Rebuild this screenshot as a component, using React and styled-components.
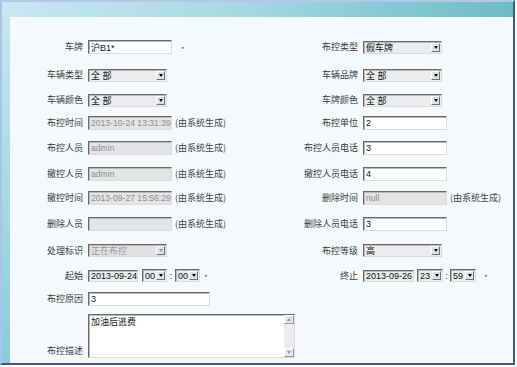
import styled, { createGlobalStyle } from "styled-components";

const GlobalStyle = createGlobalStyle`
  body {
    margin: 0;
    background: #fff;
  }
`;

const Frame = styled.div`
  width: 515px;
  height: 365px;
  box-sizing: border-box;
  border-style: solid;
  border-width: 2px;
  border-color: #b4c6ea #3b5c90 #3b5c90 #a9c4e8;
  display: grid;
  grid-template-columns: 8px 1fr;
  grid-template-rows: 15px 1fr;
`;

const TitleBar = styled.div`
  grid-column: 1 / -1;
  background: linear-gradient(90deg, #c9e8f0 0%, #a8d9e3 45%, #6dbcc6 100%);
`;

const SideStrip = styled.div`
  background: linear-gradient(180deg, #c5e6ee, #89cdda);
`;

const Panel = styled.div`
  background: #f5f9fd;
  padding-top: 16px;
  display: grid;
  grid-template-columns: 78px 182px 93px 1fr;
  grid-template-rows: 28px 28px 22px 23px 27px 25px 23px 29px 25px 25px 21px 49px;
  align-items: center;
  font-family: "Noto Sans CJK SC", sans-serif;
  font-size: 9px;
`;

const Label = styled.div`
  text-align: right;
  padding-right: 5px;
  line-height: 12px;
  color: #3a3a3a;
  white-space: nowrap;
  align-self: ${(p) => (p.$end ? "end" : "center")};
  padding-bottom: ${(p) => (p.$end ? "1px" : "0")};
`;

const Field = styled.div`
  display: flex;
  align-items: center;
  grid-column: ${(p) => p.$span || "auto"};
  align-self: ${(p) => (p.$end ? "end" : "center")};
`;

const inset = `
  box-sizing: border-box;
  border: 1px solid;
  border-color: #6a6a6a #dcdcdc #dcdcdc #6a6a6a;
  box-shadow: inset 1px 1px 0 #b8b8b8;
`;

const tones = {
  plain: { bg: "#fff", fg: "#111", size: 9 },
  locked: { bg: "#e4e4e4", fg: "#8e8e8e", size: 8.6 },
  date: { bg: "#ececec", fg: "#111", size: 9 },
};

const TextInput = styled.input.attrs({ type: "text" })`
  ${inset}
  width: ${(p) => p.$w || 84}px;
  height: 14px;
  margin: 0;
  padding: 0 0 0 2px;
  font-family: "Liberation Sans", "Noto Sans CJK SC", sans-serif;
  font-size: ${(p) => tones[p.$tone || "plain"].size}px;
  background: ${(p) => tones[p.$tone || "plain"].bg};
  color: ${(p) => tones[p.$tone || "plain"].fg};
  outline: none;
`;

const DateInput = styled(TextInput)`
  height: 12px;
`;

const SelectBox = styled.div`
  ${inset}
  width: ${(p) => p.$w}px;
  height: 13px;
  display: flex;
  align-items: center;
  padding-left: 2px;
  background: ${(p) => (p.$disabled ? "#e2e2e2" : "#ececec")};
  color: ${(p) => (p.$disabled ? "#9a9a9a" : "#111")};
  font: 9px "Liberation Sans", "Noto Sans CJK SC", sans-serif;
  white-space: nowrap;
`;

const DropButton = styled.span`
  margin-left: auto;
  margin-right: 1px;
  width: 9px;
  height: 9px;
  box-sizing: border-box;
  border: 1px solid;
  border-color: #fff #707070 #707070 #fff;
  background: #e2e2e2;
  display: flex;
  align-items: center;
  justify-content: center;

  &::after {
    content: "";
    border-left: 2px solid transparent;
    border-right: 2px solid transparent;
    border-top: 3px solid ${(p) => (p.$disabled ? "#9a9a9a" : "#000")};
  }
`;

const Note = styled.span`
  margin-left: 3px;
  color: #444;
  white-space: nowrap;
`;

const Star = styled.span`
  margin-left: ${(p) => p.$gap || 8}px;
  padding-top: 4px;
  font-size: 8px;
  color: #555;
`;

const Colon = styled.span`
  width: ${(p) => p.$w || 8}px;
  text-align: center;
  font: 9px "Liberation Sans", sans-serif;
  color: #222;
`;

const MemoBox = styled.div`
  ${inset}
  width: 207px;
  height: 44px;
  background: #fff;
  display: flex;
`;

const MemoText = styled.div`
  flex: 1;
  padding: 1px 2px;
  line-height: 12px;
  color: #222;
`;

const ScrollTrack = styled.div`
  width: 10px;
  background: #ececec;
  display: flex;
  flex-direction: column;
  justify-content: space-between;
`;

const ScrollButton = styled.span`
  width: 10px;
  height: 9px;
  box-sizing: border-box;
  border: 1px solid;
  border-color: #fff #9a9a9a #9a9a9a #fff;
  background: #e6e6e6;
  display: flex;
  align-items: center;
  justify-content: center;

  &::after {
    content: "";
    border-left: 2px solid transparent;
    border-right: 2px solid transparent;
    ${(p) => (p.$up ? "border-bottom" : "border-top")}: 3px solid #9a9a9a;
  }
`;

function Select({ w = 79, value, disabled }) {
  return (
    <SelectBox $w={w} $disabled={disabled}>
      {value}
      <DropButton $disabled={disabled} />
    </SelectBox>
  );
}

function TimePicker({ date, hour, minute, dateW, gap, selW, colonW, starGap }) {
  return (
    <Field>
      <DateInput $w={dateW} $tone="date" defaultValue={date} readOnly />
      <span style={{ width: gap }} />
      <Select w={selW} value={hour} />
      <Colon $w={colonW}>:</Colon>
      <Select w={selW} value={minute} />
      <Star $gap={starGap}>*</Star>
    </Field>
  );
}

const SYS = "(由系统生成)";

export default function App() {
  return (
    <>
      <GlobalStyle />
      <Frame>
        <TitleBar />
        <SideStrip />
        <Panel>
          <Label>车牌</Label>
          <Field>
            <TextInput defaultValue="沪B1*" />
            <Star $gap={9}>*</Star>
          </Field>
          <Label>布控类型</Label>
          <Field>
            <Select value="假车牌" />
          </Field>

          <Label>车辆类型</Label>
          <Field>
            <Select value="全 部" />
          </Field>
          <Label>车辆品牌</Label>
          <Field>
            <Select value="全 部" />
          </Field>

          <Label>车辆颜色</Label>
          <Field>
            <Select value="全 部" />
          </Field>
          <Label>车牌颜色</Label>
          <Field>
            <Select value="全 部" />
          </Field>

          <Label>布控时间</Label>
          <Field>
            <TextInput $tone="locked" defaultValue="2013-10-24 13:31:39" readOnly />
            <Note>{SYS}</Note>
          </Field>
          <Label>布控单位</Label>
          <Field>
            <TextInput defaultValue="2" />
          </Field>

          <Label>布控人员</Label>
          <Field>
            <TextInput $tone="locked" defaultValue="admin" readOnly />
            <Note>{SYS}</Note>
          </Field>
          <Label>布控人员电话</Label>
          <Field>
            <TextInput defaultValue="3" />
          </Field>

          <Label>撤控人员</Label>
          <Field>
            <TextInput $tone="locked" defaultValue="admin" readOnly />
            <Note>{SYS}</Note>
          </Field>
          <Label>撤控人员电话</Label>
          <Field>
            <TextInput defaultValue="4" />
          </Field>

          <Label>撤控时间</Label>
          <Field>
            <TextInput $tone="locked" defaultValue="2013-09-27 15:56:29" readOnly />
            <Note>{SYS}</Note>
          </Field>
          <Label>删除时间</Label>
          <Field>
            <TextInput $tone="locked" defaultValue="null" readOnly />
            <Note>{SYS}</Note>
          </Field>

          <Label>删除人员</Label>
          <Field>
            <TextInput $tone="locked" defaultValue="" readOnly />
            <Note>{SYS}</Note>
          </Field>
          <Label>删除人员电话</Label>
          <Field>
            <TextInput defaultValue="3" />
          </Field>

          <Label>处理标识</Label>
          <Field>
            <Select value="正在布控" disabled />
          </Field>
          <Label>布控等级</Label>
          <Field>
            <Select value="高" />
          </Field>

          <Label>起始</Label>
          <TimePicker date="2013-09-24" hour="00" minute="00" dateW={50} gap={4} selW={25} colonW={8} starGap={4} />
          <Label>终止</Label>
          <TimePicker date="2013-09-26" hour="23" minute="59" dateW={51} gap={3} selW={26} colonW={7} starGap={8} />

          <Label>布控原因</Label>
          <Field $span="2 / -1">
            <TextInput $w={122} defaultValue="3" />
          </Field>

          <Label $end>布控描述</Label>
          <Field $span="2 / -1" $end>
            <MemoBox>
              <MemoText>加油后逃费</MemoText>
              <ScrollTrack>
                <ScrollButton $up />
                <ScrollButton />
              </ScrollTrack>
            </MemoBox>
          </Field>
        </Panel>
      </Frame>
    </>
  );
}
